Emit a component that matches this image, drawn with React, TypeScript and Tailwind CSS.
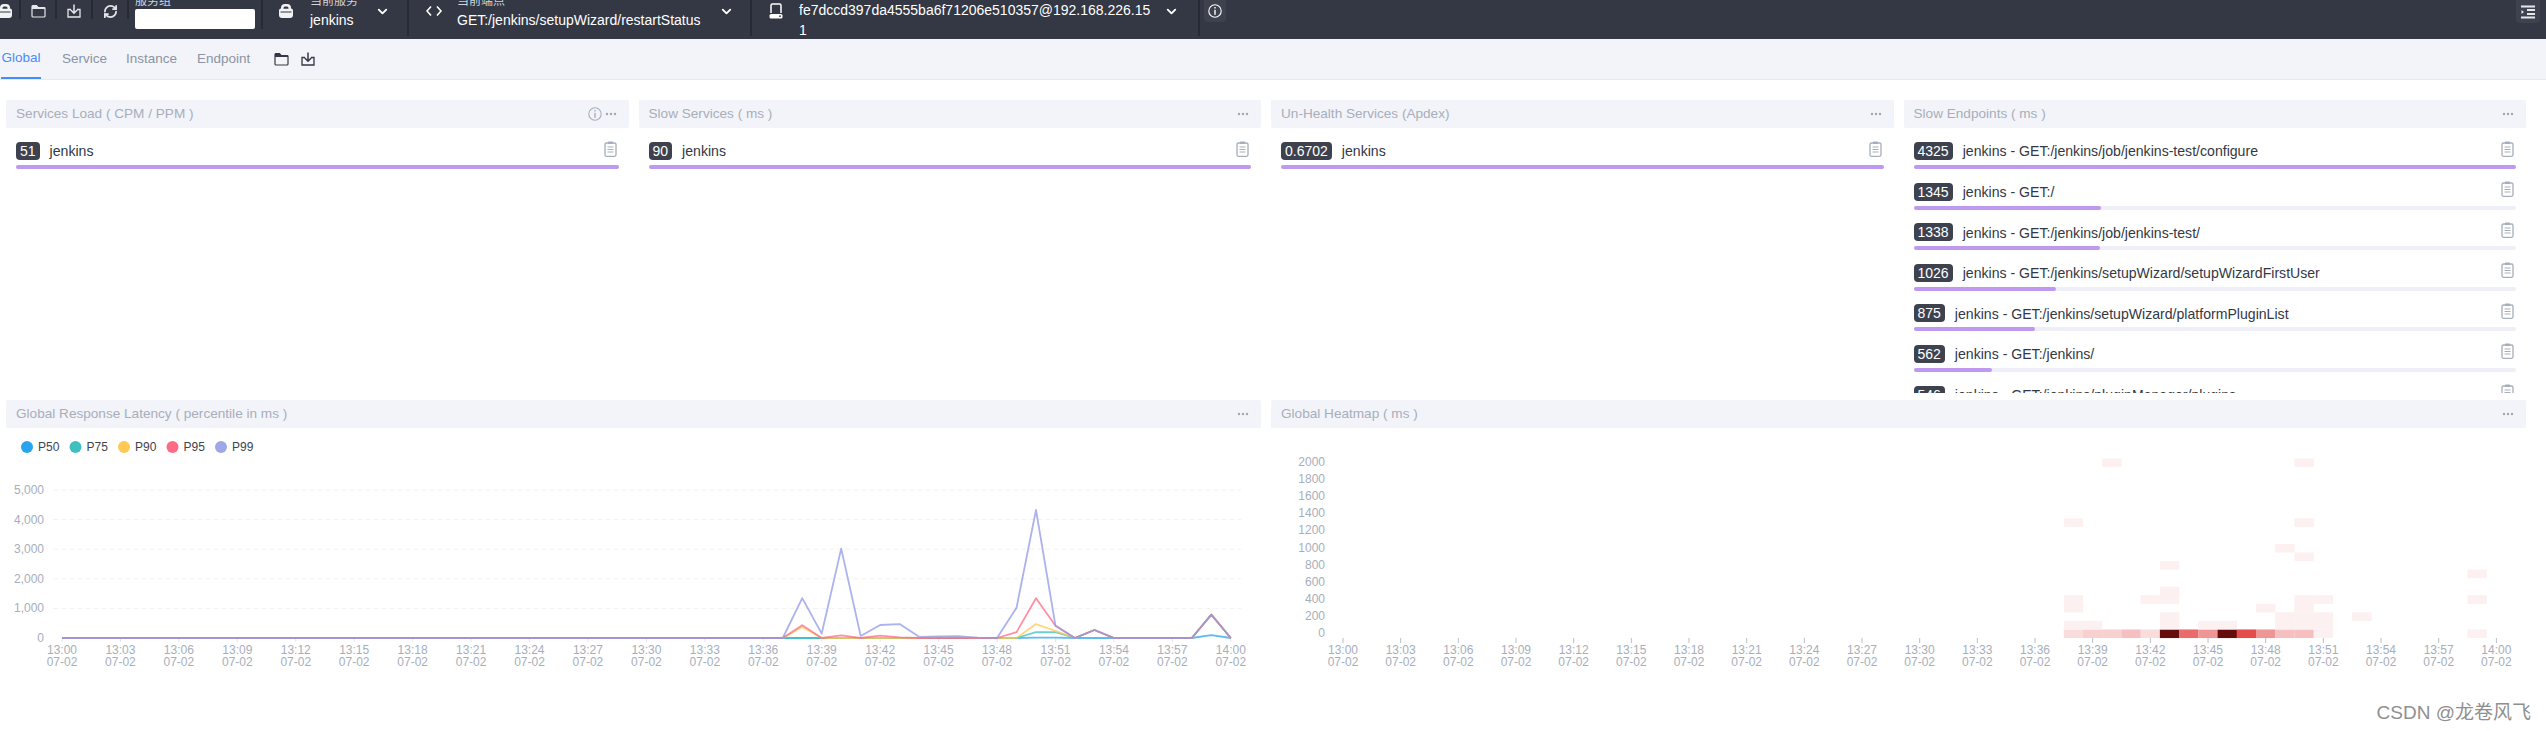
import { ChevronDown, RefreshCw } from "lucide-react";

const font = { fontFamily: '"Liberation Sans", "Noto Sans CJK SC", sans-serif' };

const LockIcon = () => (
  <svg width="14" height="14" viewBox="0 0 14 14" fill="none">
    <path d="M2 5V4a4 4 0 0 1 4-4h2a4 4 0 0 1 4 4v1z" fill="#f1f2f4" />
    <path d="M2 4.500h10a2 2 0 0 1 2 2V11a3 3 0 0 1-3 3H3a3 3 0 0 1-3-3V6.500a2 2 0 0 1 2-2z" fill="#f1f2f4" />
    <path d="M4.500 4.800V4a1.500 1.500 0 0 1 1.500-1.500h2A1.500 1.500 0 0 1 9.500 4v0.800z" fill="#333844" />
    <rect x="1.500" y="7.500" width="11" height="1" fill="#333844" />
  </svg>
);

const FolderIcon = ({ color = "#e6e7ea" }: { color?: string }) => (
  <svg width="15" height="13" viewBox="0 0 15 13" fill="none">
    <path d="M1 1.500V11a1 1 0 0 0 1 1h11a1 1 0 0 0 1-1V3.500a1 1 0 0 0-1-1H7L5.500 0.700H2a1 1 0 0 0-1 .8z" stroke={color} strokeWidth="1.200" />
    <path d="M1 1h5l1.500 1.500H14V4H1z" fill={color} />
  </svg>
);

const DownloadIcon = ({ color = "#e6e7ea" }: { color?: string }) => (
  <svg width="14" height="14" viewBox="0 0 14 14" fill="none">
    <path d="M7 0.500V9M3.800 6l3.200 3.200L10.200 6" stroke={color} strokeWidth="1.500" />
    <path d="M4 5.500H1v7.500h12V5.500h-3" stroke={color} strokeWidth="1.300" />
  </svg>
);

const ClipboardIcon = () => (
  <svg width="13" height="16" viewBox="0 0 13 16" fill="none">
    <rect x="1" y="2" width="11" height="13.300" rx="1.500" stroke="#a7aebb" strokeWidth="1.300" />
    <rect x="4" y="0.500" width="5" height="2.500" rx="0.500" fill="#a7aebb" />
    <path d="M3.500 6h6M3.500 8.500h6M3.500 11h6" stroke="#a7aebb" strokeWidth="1.100" />
  </svg>
);

const InfoIcon = ({ color, size = 14 }: { color: string; size?: number }) => (
  <svg width={size} height={size} viewBox="0 0 14 14" fill="none">
    <circle cx="7" cy="7" r="6.200" stroke={color} strokeWidth="1.100" />
    <rect x="6.300" y="3" width="1.400" height="1.500" fill={color} />
    <rect x="6.300" y="5.800" width="1.400" height="5" fill={color} />
  </svg>
);

const Dots = () => (
  <svg width="12" height="4" viewBox="0 0 12 4" fill="#a0a6b3">
    <circle cx="2" cy="2" r="1.200" />
    <circle cx="6" cy="2" r="1.200" />
    <circle cx="10" cy="2" r="1.200" />
  </svg>
);

const Divider = ({ h }: { h: string }) => <div className={`w-[2px] shrink-0 self-start bg-[#262a33] ${h}`} />;

function TopBar() {
  return (
    <header className="flex h-[39px] shrink-0 items-start overflow-hidden bg-[#333844] text-white">
      <div className="flex w-[131px] shrink-0 items-start">
        <div className="-ml-[4px] flex h-[19px] w-[25px] items-start justify-center border-r-2 border-[#262a33] pt-[4px] pr-[6px]"><LockIcon /></div>
        <div className="flex h-[19px] w-[36px] items-start justify-center border-r-2 border-[#262a33] pt-[5px]"><FolderIcon /></div>
        <div className="flex h-[19px] w-[36px] items-start justify-center border-r-2 border-[#262a33] pt-[4px]"><DownloadIcon /></div>
        <div className="flex h-[19px] w-[36px] items-start justify-center border-r-2 border-[#262a33] pt-[4px]"><RefreshCw size={15} strokeWidth={2.8} color="#e6e7ea" /></div>
      </div>
      <div className="ml-[4px] w-[120px] shrink-0">
        <div className="-mt-[6px] h-[15px] text-[12px] leading-[15px] text-[#cfd3dc]">服务组</div>
        <div className="h-[20px] rounded-[2px] bg-white" />
      </div>
      <div className="ml-[6px]"><Divider h="h-[29px]" /></div>
      <div className="flex w-[144px] shrink-0 items-start pl-[16px]">
        <div className="mt-[4px] w-[31px] shrink-0"><LockIcon /></div>
        <div className="w-[62px]">
          <div className="-mt-[6px] h-[15px] text-[12px] leading-[15px] text-[#cfd3dc]">当前服务</div>
          <div className="mt-[1px] text-[14px] leading-[20px]">jenkins</div>
        </div>
        <ChevronDown size={15} strokeWidth={3} className="mt-[4px] ml-[3px]" />
      </div>
      <Divider h="h-[36px]" />
      <div className="flex w-[341px] shrink-0 items-start pl-[17px]">
        <svg className="mt-[5px] w-[31px] shrink-0" width="16" height="12" viewBox="0 0 16 12" fill="none" preserveAspectRatio="xMinYMid">
          <path d="M5 1.500L1 6l4 4.500M11 1.500L15 6l-4 4.500" stroke="#fff" strokeWidth="1.600" />
        </svg>
        <div className="w-[256px] shrink-0">
          <div className="-mt-[6px] h-[15px] text-[12px] leading-[15px] text-[#cfd3dc]">当前端点</div>
          <div className="mt-[1px] whitespace-nowrap text-[14px] leading-[20px]">GET:/jenkins/setupWizard/restartStatus</div>
        </div>
        <ChevronDown size={15} strokeWidth={3} className="mt-[4px] ml-[6px]" />
      </div>
      <Divider h="h-[36px]" />
      <div className="flex w-[446px] shrink-0 items-start pl-[17px]">
        <svg className="mt-[3px] w-[30px] shrink-0" width="14" height="16" viewBox="0 0 14 16" fill="none" preserveAspectRatio="xMinYMid">
          <path d="M2 10V2.500A1.500 1.500 0 0 1 3.500 1h7A1.500 1.500 0 0 1 12 2.500V10" stroke="#fff" strokeWidth="1.500" />
          <rect x="0.500" y="11" width="13" height="4.500" rx="1.500" fill="#fff" />
          <circle cx="11" cy="13.200" r="0.900" fill="#333844" />
        </svg>
        <div className="w-[352px] shrink-0 break-all text-[14px] leading-[20px]">fe7dccd397da4555ba6f71206e510357@192.168.226.151</div>
        <ChevronDown size={15} strokeWidth={3} className="mt-[4px] ml-[13px]" />
      </div>
      <Divider h="h-[36px]" />
      <div className="ml-[4px] flex h-[22px] w-[22px] items-center justify-center rounded-b-[4px] bg-[#3d424e]">
        <InfoIcon color="#fff" />
      </div>
      <div className="mr-[6px] ml-auto flex h-[23px] w-[24px] items-center justify-center rounded-b-[4px] bg-[#3d424e]">
        <svg width="14" height="14" viewBox="0 0 14 14" fill="#e6e7ea">
          <rect x="0" y="0.500" width="14" height="2" />
          <rect x="6" y="4" width="8" height="2" />
          <rect x="6" y="8" width="8" height="2" />
          <rect x="0" y="11.500" width="14" height="2" />
          <path d="M0.500 5l2.500 2-2.500 2z" />
        </svg>
      </div>
    </header>
  );
}

function TabBar() {
  return (
    <nav className="flex h-[41px] shrink-0 items-stretch border-b border-[#e8e9ee] bg-[#f3f4f9] text-[13.500px] text-[#8c93a2]">
      <div className="ml-[1px] flex w-[40px] items-center justify-center border-b-2 border-[#448dfe] text-[#448dfe]">Global</div>
      <div className="ml-[21px] flex items-center">Service</div>
      <div className="ml-[19px] flex items-center">Instance</div>
      <div className="ml-[20px] flex items-center">Endpoint</div>
      <div className="ml-[24px] flex items-center"><FolderIcon color="#333844" /></div>
      <div className="ml-[12px] flex items-center"><DownloadIcon color="#333844" /></div>
    </nav>
  );
}

function PanelHeader({ title, info }: { title: string; info?: boolean }) {
  return (
    <div className="flex h-[28px] shrink-0 items-center rounded-[2px] bg-[#f3f4f9] pr-[12px] pl-[10px] text-[13.600px] text-[#a7aebb]">
      <span>{title}</span>
      <span className="ml-auto flex items-center gap-[3px]">
        {info && <InfoIcon color="#a7aebb" />}
        <Dots />
      </span>
    </div>
  );
}

type Row = { value: string; label: string; pct: number };

function TopList({ title, rows, info }: { title: string; rows: Row[]; info?: boolean }) {
  return (
    <section className="flex h-[293px] min-w-0 flex-col overflow-hidden">
      <PanelHeader title={title} info={info} />
      <div className="flex flex-col gap-[18.600px] px-[10px] pt-[14px]">
        {rows.map((row) => (
          <div key={row.label + row.value} className="h-[22px] shrink-0 text-[14.100px] text-[#333844]">
            <div className="flex h-[18px] items-center">
              <span className="h-[18px] rounded-[4px] bg-[#3d424e] px-[4px] text-[14px] leading-[19px] text-white">{row.value}</span>
              <span className="ml-[10px] pt-[2px]">{row.label}</span>
              <span className="mr-[2px] ml-auto -mt-[5px]"><ClipboardIcon /></span>
            </div>
            <div className="mt-[5px] h-[4px] rounded-[2px] bg-[#eeeff7]">
              <div className="h-full rounded-[2px] bg-[#bd99f0]" style={{ width: `${row.pct}%` }} />
            </div>
          </div>
        ))}
      </div>
    </section>
  );
}

// one value per minute, 13:00 to 14:00
function series(points: Record<number, number>) {
  return Array.from({ length: 61 }, (_, i) => points[i] ?? 0);
}

const latency = [
  { name: "P50", color: "#2ba4ef", stroke: "#2ba4ef", data: series({ 50: 15, 51: 15, 59: 100 }) },
  { name: "P75", color: "#3fbfbf", stroke: "#3fbfbf", data: series({ 50: 200, 51: 195, 53: 270, 59: 790 }) },
  { name: "P90", color: "#ffc952", stroke: "#ffc952", data: series({ 38: 370, 45: 20, 46: 20, 50: 470, 51: 240, 53: 270, 59: 790 }) },
  { name: "P95", color: "#ff6a84", stroke: "#ff6a84", data: series({ 38: 430, 40: 90, 42: 80, 43: 20, 49: 200, 50: 1345, 51: 415, 53: 270, 59: 790 }) },
  { name: "P99", color: "#a0a7e6", stroke: "#8f98e8", data: series({ 38: 1345, 39: 150, 40: 3020, 41: 70, 42: 440, 43: 470, 44: 40, 45: 50, 46: 60, 47: 10, 49: 1020, 50: 4325, 51: 415, 53: 270, 59: 790 }) },
];

const ticks = Array.from({ length: 21 }, (_, i) => {
  const m = i * 3;
  return m === 60 ? "14:00" : `13:${String(m).padStart(2, "0")}`;
});

function AxisLabel({ x, label }: { x: number; label: string }) {
  return (
    <text x={x} textAnchor="middle" fontSize="12" fill="#a7aebb">
      <tspan x={x} y="226">{label}</tspan>
      <tspan x={x} y="238">07-02</tspan>
    </text>
  );
}

// svg origin sits at y=428 on the page, right under the panel header
function LatencyChart() {
  const px = (i: number) => 56 + i * 19.48;
  const py = (v: number) => 210 - (v / 1000) * 29.6;
  return (
    <svg className="block" width="1255" height="262" style={font}>
      {latency.map((s, i) => (
        <g key={s.name}>
          <circle cx={21 + i * 48.500} cy="19" r="6" fill={s.color} />
          <text x={32 + i * 48.500} y="23" fontSize="12" fill="#3d444f">{s.name}</text>
        </g>
      ))}
      {[0, 1, 2, 3, 4, 5].map((n) => (
        <g key={n}>
          {n > 0 && <line x1="47" x2="1235" y1={py(n * 1000)} y2={py(n * 1000)} stroke="#f1f2f5" strokeDasharray="5 3" />}
          <text x="38" y={py(n * 1000) + 4} textAnchor="end" fontSize="12" fill="#a7aebb">{n === 0 ? "0" : `${n},000`}</text>
        </g>
      ))}
      {ticks.map((t, i) => (
        <g key={t}>
          <line x1={px(i * 3)} x2={px(i * 3)} y1="210" y2="214" stroke="#e6e8ee" />
          <AxisLabel x={px(i * 3)} label={t} />
        </g>
      ))}
      {latency.map((s) => (
        <polyline
          key={s.name}
          points={s.data.map((v, i) => `${px(i)},${py(v)}`).join(" ")}
          fill="none"
          stroke={s.stroke}
          strokeOpacity="0.75"
          strokeWidth="1.800"
          strokeLinejoin="round"
        />
      ))}
    </svg>
  );
}

const C1 = "#fcf0f0";
const heatCells: [number, number, string][] = [
  [38, 0, "#f9dddd"], [39, 0, "#f7d0d0"], [40, 0, "#f7d0d0"], [41, 0, "#f6c0c2"], [42, 0, "#f9dddd"], [43, 0, "#650c0c"],
  [44, 0, "#ea6b6b"], [45, 0, "#f09595"], [46, 0, "#650c0c"], [47, 0, "#e54d4d"], [48, 0, "#f09595"], [49, 0, "#f6c0c2"],
  [50, 0, "#f6c0c2"], [51, 0, C1], [59, 0, C1],
  [38, 1, C1], [39, 1, C1], [43, 1, C1], [45, 1, C1], [46, 1, C1], [49, 1, C1], [50, 1, C1], [51, 1, C1],
  [43, 2, C1], [49, 2, C1], [50, 2, C1], [51, 2, C1], [53, 2, C1],
  [38, 3, C1], [48, 3, C1], [50, 3, C1],
  [38, 4, C1], [42, 4, C1], [43, 4, C1], [50, 4, C1], [51, 4, C1], [59, 4, C1],
  [43, 5, C1], [59, 7, C1], [43, 8, C1], [50, 9, C1], [49, 10, C1],
  [38, 13, C1], [50, 13, C1], [40, 20, C1], [50, 20, C1],
];

function Heatmap() {
  const px = (i: number) => 72 + i * 19.223;
  const yLabels = [0, 200, 400, 600, 800, 1000, 1200, 1400, 1600, 1800, 2000];
  return (
    <svg className="block" width="1255" height="262" style={font}>
      {yLabels.map((v, i) => (
        <text key={v} x="54" y={209 - i * 17.100} textAnchor="end" fontSize="12" fill="#a7aebb">{v}</text>
      ))}
      {heatCells.map(([col, row, fill]) => (
        <rect key={`${col}-${row}`} x={px(col) - 9.700} y={210 - (row + 1) * 8.550} width="19.400" height="8.600" fill={fill} />
      ))}
      {ticks.map((t, i) => (
        <g key={t}>
          <line x1={px(i * 3)} x2={px(i * 3)} y1="210" y2="215" stroke="#b9bec9" />
          <AxisLabel x={px(i * 3)} label={t} />
        </g>
      ))}
    </svg>
  );
}

const endpoints: Row[] = [
  { value: "4325", label: "jenkins - GET:/jenkins/job/jenkins-test/configure", pct: 100 },
  { value: "1345", label: "jenkins - GET:/", pct: 31.1 },
  { value: "1338", label: "jenkins - GET:/jenkins/job/jenkins-test/", pct: 30.9 },
  { value: "1026", label: "jenkins - GET:/jenkins/setupWizard/setupWizardFirstUser", pct: 23.7 },
  { value: "875", label: "jenkins - GET:/jenkins/setupWizard/platformPluginList", pct: 20.2 },
  { value: "562", label: "jenkins - GET:/jenkins/", pct: 13 },
  { value: "546", label: "jenkins - GET:/jenkins/pluginManager/plugins", pct: 12.6 },
];

export default function App() {
  return (
    <div className="relative flex h-[731px] w-[2546px] flex-col overflow-hidden bg-white" style={font}>
      <TopBar />
      <TabBar />
      <main className="grid grid-cols-4 gap-x-[10px] gap-y-[7px] pt-[20px] pr-[20px] pl-[6px]">
        <TopList title="Services Load ( CPM / PPM )" info rows={[{ value: "51", label: "jenkins", pct: 100 }]} />
        <TopList title="Slow Services ( ms )" rows={[{ value: "90", label: "jenkins", pct: 100 }]} />
        <TopList title="Un-Health Services (Apdex)" rows={[{ value: "0.6702", label: "jenkins", pct: 100 }]} />
        <TopList title="Slow Endpoints ( ms )" rows={endpoints} />
        <section className="col-span-2 min-w-0">
          <PanelHeader title="Global Response Latency ( percentile in ms )" />
          <LatencyChart />
        </section>
        <section className="col-span-2 min-w-0">
          <PanelHeader title="Global Heatmap ( ms )" />
          <Heatmap />
        </section>
      </main>
      <div className="absolute right-[15px] bottom-[6px] text-[19px] leading-[24px] text-[#8f8f8f]">CSDN @龙卷风飞</div>
    </div>
  );
}
